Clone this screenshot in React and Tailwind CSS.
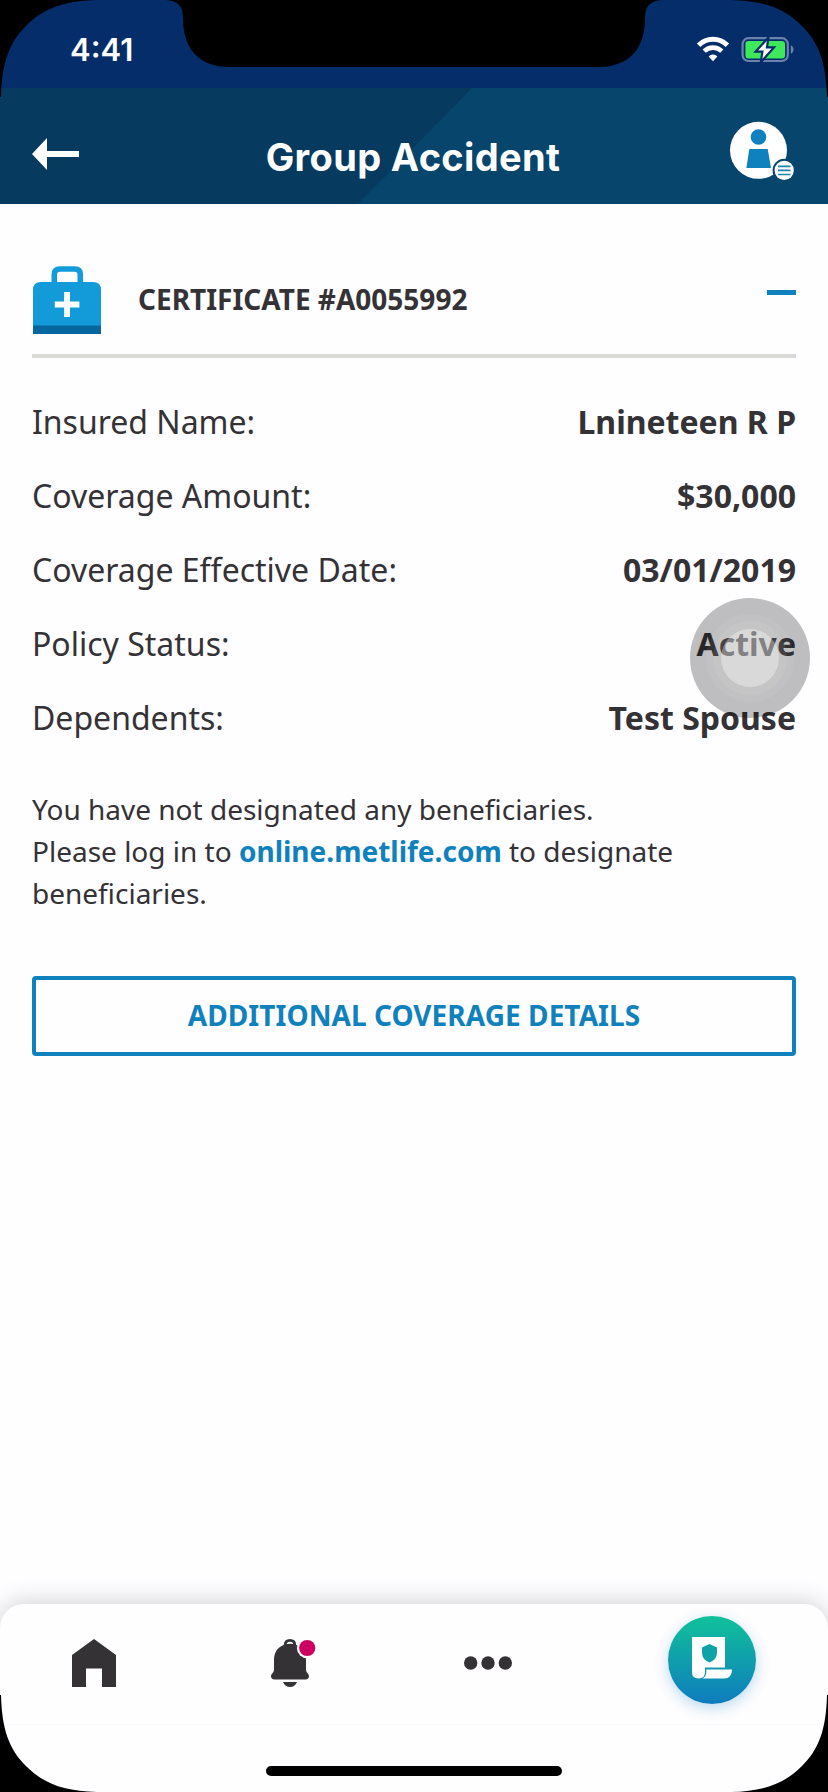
const ROWS = [
  ["Insured Name:", "Lnineteen R P"],
  ["Coverage Amount:", "$30,000"],
  ["Coverage Effective Date:", "03/01/2019"],
  ["Policy Status:", "Active"],
  ["Dependents:", "Test Spouse"],
];

function StatusBar() {
  return (
    <div className="flex h-22 items-start justify-between bg-[#042d6a] pl-[70px] pr-[33px] pt-[34px] text-white">
      <span className="font-['Inter',sans-serif] text-[31px] leading-[32px] font-semibold">4:41</span>
      <div className="flex items-start gap-[11px] pt-[2px]">
        <svg width="34" height="28" viewBox="0 0 34 28" fill="none">
          <path d="M2.6 9.2A20.5 20.5 0 0 1 31.4 9.2" stroke="#fff" strokeWidth="5" />
          <path d="M8.2 15.2A12.6 12.6 0 0 1 25.8 15.2" stroke="#fff" strokeWidth="4.6" />
          <path d="M12.6 20.4A6.3 6.3 0 0 1 21.4 20.4L17 25.2Z" fill="#fff" />
        </svg>
        <svg width="54" height="28" viewBox="0 0 54 28" fill="none">
          <rect x="1.6" y="2.2" width="45.2" height="22.8" rx="6" stroke="#6c82ae" strokeWidth="2.2" />
          <rect x="4.4" y="5" width="39.6" height="17.4" rx="3" fill="#3ee85b" />
          <path d="M49.8 9.3C53.4 10.6 53.4 16.4 49.8 17.7Z" fill="#6c82ae" />
          <path d="M27.4 1.4L14.6 15.6H21.4L19.8 26.4L33 11.4H26Z" fill="#fff" stroke="#042d6a" strokeWidth="2.2" />
        </svg>
      </div>
    </div>
  );
}

function Header() {
  return (
    <header className="relative flex h-[116px] items-center justify-between bg-[#063b5f] pl-8 pr-[34px]">
      <svg className="absolute inset-0" width="828" height="116" viewBox="0 0 828 116">
        <path d="M472 0H828V116H358Z" fill="#07456d" />
      </svg>
      <svg className="relative mt-4" width="66" height="32" viewBox="0 0 66 32">
        <path d="M0 16L15 0V13H47V19H15V32Z" fill="#fff" />
      </svg>
      <h1 className="relative mt-[22px] font-['Inter',sans-serif] text-[38px] leading-[48px] font-bold tracking-[0.35px] text-white">
        Group Accident
      </h1>
      <svg className="relative mt-[10px]" width="66" height="60" viewBox="0 0 66 60">
        <circle cx="30.5" cy="29.3" r="28.5" fill="#fff" />
        <circle cx="30.5" cy="16" r="7.8" fill="#0f81bd" />
        <path d="M21.3 28H39.7L43 47H18.4Z" fill="#0f81bd" />
        <circle cx="56.2" cy="49.4" r="11.6" fill="#07456d" />
        <circle cx="56.2" cy="49.4" r="9.6" fill="#fff" />
        <path d="M50 45.3H62.5M50 49.4H62.5M50 53.5H62.5" stroke="#1c84ad" strokeWidth="1.7" />
      </svg>
    </header>
  );
}

function MedicalBag() {
  return (
    <svg className="ml-px" width="69" height="69" viewBox="0 0 69 69">
      <path d="M21.3 18V8.5Q21.3 3 27 3H41.5Q47.3 3 47.3 8.5V18" fill="none" stroke="#129ad9" strokeWidth="5.6" />
      <path d="M0 60V24Q0 16 8 16H60Q68 16 68 24V60Z" fill="#129ad9" />
      <path d="M0 59.6H68V68H0Z" fill="#08669f" />
      <path d="M31.1 26H37V35.5H46.4V41.4H37V51H31.1V41.4H21.8V35.5H31.1Z" fill="#fff" />
    </svg>
  );
}

function TabBar() {
  return (
    <nav className="flex h-[188px] flex-col rounded-t-[24px] bg-[#fefdff] shadow-[0_-2px_24px_rgba(0,0,0,0.18)]">
      <div className="flex h-[121px] items-start border-b border-[#faf9fb]">
        <svg className="ml-[72px] mt-[35px]" width="44" height="48" viewBox="0 0 44 48">
          <path d="M22 0L44 16V48H30V29.5H14V48H0V16Z" fill="#343235" />
        </svg>
        <svg className="ml-[155px] mt-[35px]" width="46" height="49" viewBox="0 0 46 49">
          <path d="M14.2 8V6Q14.2 1.4 19 1.4Q23.8 1.4 23.8 6V8" fill="none" stroke="#343235" strokeWidth="2.8" />
          <path d="M14 5.4Q19 4.2 24 5.4C31 7.5 35 13 35 21V31Q35 33 36.8 34.4C39.2 37 37.7 40.5 34.6 40.5H3.4C.3 40.5 -1.3 37 1.2 34.4Q3 33 3 31V21C3 13 7 7.5 14 5.4Z" fill="#343235" />
          <path d="M12 43H26Q24 48 19 48Q14 48 12 43Z" fill="#343235" />
          <circle cx="36.2" cy="9" r="10.3" fill="#fefdff" />
          <circle cx="36.2" cy="9" r="8.1" fill="#cb0060" />
        </svg>
        <svg className="ml-[147px] mt-[51px]" width="48" height="16" viewBox="0 0 48 16">
          <circle cx="6.7" cy="8" r="6.7" fill="#343235" />
          <circle cx="24" cy="8" r="6.7" fill="#343235" />
          <circle cx="41.3" cy="8" r="6.7" fill="#343235" />
        </svg>
        <button className="ml-[156px] mt-3 flex h-22 w-22 items-center justify-center rounded-full bg-linear-to-b/srgb from-[#11c19a] to-[#0e7cbe] shadow-[0_4px_14px_rgba(14,124,190,0.28)]">
          <svg className="-mt-1" width="40" height="42" viewBox="0 0 40 42">
            <path d="M0 0H33V30.5H13V35Q13 41.5 6.5 41.5Q0 41.5 0 35Z" fill="#fff" />
            <path d="M14.3 32.5H40Q40 41.5 32 41.5H10.5Q14.3 39.5 14.3 35Z" fill="#fff" />
            <path d="M17.5 7L25 10.5V15.5Q25 22.5 17.5 25.5Q10 22.5 10 15.5V10.5Z" fill="#0fa3a8" />
          </svg>
        </button>
      </div>
      <div className="mx-auto mt-[41px] h-[10px] w-[296px] rounded-full bg-black" />
    </nav>
  );
}

function TouchIndicator() {
  return (
    <div className="absolute left-[690px] top-[598px] flex h-[120px] w-[120px] items-center justify-center rounded-full bg-black/25">
      <div className="flex h-[88px] w-[88px] items-center justify-center rounded-full bg-white/6">
        <div className="flex h-[74px] w-[74px] items-center justify-center rounded-full bg-white/8">
          <div className="h-[58px] w-[58px] rounded-full bg-white/34" />
        </div>
      </div>
    </div>
  );
}

function DeviceFrame() {
  return (
    <svg className="pointer-events-none absolute inset-0" width="828" height="1792" viewBox="0 0 828 1792">
      <path d="M0 0H97C62 1 43 9 26 26C9 43 2 62 1 97H0Z" />
      <path d="M828 0H731C766 1 785 9 802 26C819 43 826 62 827 97H828Z" />
      <path d="M0 1792H97C62 1791 43 1783 26 1766C9 1749 2 1730 1 1695H0Z" />
      <path d="M828 1792H731C766 1791 785 1783 802 1766C819 1749 826 1730 827 1695H828Z" />
      <path d="M166 0C178 1 183 6 183 18C183 48 198 67 230 67H598C630 67 645 48 645 18C645 6 650 1 662 0Z" />
    </svg>
  );
}

export default function App() {
  return (
    <div className="relative flex h-[1792px] w-[828px] flex-col overflow-hidden bg-[#fefdff] font-['Noto_Sans',sans-serif] text-[#343235]">
      <StatusBar />
      <Header />
      <main className="flex flex-1 flex-col px-8 pt-[62px]">
        <div className="flex h-[92px] items-start border-b-4 border-[#d9d9d6]">
          <MedicalBag />
          <h2 className="ml-9 mt-[14px] text-[28px] leading-[38px] font-bold">CERTIFICATE #A0055992</h2>
          <div className="ml-auto mt-[24px] h-[5px] w-[29px] bg-[#0f81bd]" />
        </div>
        <dl className="mt-[27px] text-[32px]">
          {ROWS.map(([label, value]) => (
            <div key={label} className="flex h-[74px] items-center justify-between">
              <dt>{label}</dt>
              <dd className="font-bold">{value}</dd>
            </div>
          ))}
        </dl>
        <p className="mt-[33px] text-[28px] leading-[42px]">
          You have not designated any beneficiaries.
          <br />
          Please log in to <a className="font-bold text-[#0f81bd]">online.metlife.com</a> to designate
          <br />
          beneficiaries.
        </p>
        <button className="mt-[62px] h-20 rounded-[4px] border-4 border-[#0f81bd] pb-[2px] text-[28px] font-bold tracking-[0.06px] text-[#0f81bd]">
          ADDITIONAL COVERAGE DETAILS
        </button>
      </main>
      <TabBar />
      <TouchIndicator />
      <DeviceFrame />
    </div>
  );
}
